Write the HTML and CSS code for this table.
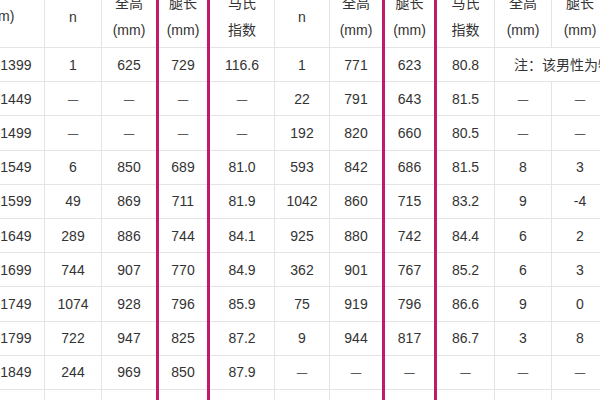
FILE: index.html
```html
<!DOCTYPE html>
<html lang="zh-CN">
<head>
<meta charset="utf-8">
<title>身高与腿长</title>
<link rel="stylesheet" href="styles.css">
</head>
<body>
<div class="frame">
  <table class="data">
    <colgroup>
      <col class="c-range"><col class="c-n1"><col class="c-h1"><col class="c-l1"><col class="c-i1">
      <col class="c-n2"><col class="c-h2"><col class="c-l2"><col class="c-i2"><col class="c-d1"><col class="c-d2">
    </colgroup>
    <thead>
      <tr class="group">
        <th rowspan="2" class="range-head">身高<br>(mm)</th>
        <th colspan="4">男性</th>
        <th colspan="4">女性</th>
        <th colspan="2">男女差</th>
      </tr>
      <tr class="sub">
        <th>n</th><th>全高<br>(mm)</th><th class="hl">腿长<br>(mm)</th><th>马氏<br>指数</th>
        <th>n</th><th>全高<br>(mm)</th><th class="hl">腿长<br>(mm)</th><th>马氏<br>指数</th>
        <th>全高<br>(mm)</th><th>腿长<br>(mm)</th>
      </tr>
    </thead>
    <tbody>
      <tr><td>1350-1399</td><td>1</td><td>625</td><td class="hl">729</td><td>116.6</td><td>1</td><td>771</td><td class="hl">623</td><td>80.8</td><td colspan="2" class="note">注：该男性为特殊个例</td></tr>
      <tr><td>1400-1449</td><td class="na">—</td><td class="na">—</td><td class="hl na">—</td><td class="na">—</td><td>22</td><td>791</td><td class="hl">643</td><td>81.5</td><td class="na">—</td><td class="na">—</td></tr>
      <tr><td>1450-1499</td><td class="na">—</td><td class="na">—</td><td class="hl na">—</td><td class="na">—</td><td>192</td><td>820</td><td class="hl">660</td><td>80.5</td><td class="na">—</td><td class="na">—</td></tr>
      <tr><td>1500-1549</td><td>6</td><td>850</td><td class="hl">689</td><td>81.0</td><td>593</td><td>842</td><td class="hl">686</td><td>81.5</td><td>8</td><td>3</td></tr>
      <tr><td>1550-1599</td><td>49</td><td>869</td><td class="hl">711</td><td>81.9</td><td>1042</td><td>860</td><td class="hl">715</td><td>83.2</td><td>9</td><td>-4</td></tr>
      <tr><td>1600-1649</td><td>289</td><td>886</td><td class="hl">744</td><td>84.1</td><td>925</td><td>880</td><td class="hl">742</td><td>84.4</td><td>6</td><td>2</td></tr>
      <tr><td>1650-1699</td><td>744</td><td>907</td><td class="hl">770</td><td>84.9</td><td>362</td><td>901</td><td class="hl">767</td><td>85.2</td><td>6</td><td>3</td></tr>
      <tr><td>1700-1749</td><td>1074</td><td>928</td><td class="hl">796</td><td>85.9</td><td>75</td><td>919</td><td class="hl">796</td><td>86.6</td><td>9</td><td>0</td></tr>
      <tr><td>1750-1799</td><td>722</td><td>947</td><td class="hl">825</td><td>87.2</td><td>9</td><td>944</td><td class="hl">817</td><td>86.7</td><td>3</td><td>8</td></tr>
      <tr><td>1800-1849</td><td>244</td><td>969</td><td class="hl">850</td><td>87.9</td><td class="na">—</td><td class="na">—</td><td class="hl na">—</td><td class="na">—</td><td class="na">—</td><td class="na">—</td></tr>
      <tr><td>1850-1899</td><td>33</td><td>988</td><td class="hl">874</td><td>88.5</td><td class="na">—</td><td class="na">—</td><td class="hl na">—</td><td class="na">—</td><td class="na">—</td><td class="na">—</td></tr>
    </tbody>
  </table>
</div>
</body>
</html>
```
FILE: styles.css
```css
* { box-sizing: border-box; }

html, body {
  margin: 0;
  padding: 0;
  background: #ffffff;
}

body {
  font-family: "Liberation Sans", "Noto Sans CJK SC", sans-serif;
  font-size: 14px;
  color: #333333;
}

.frame {
  width: 600px;
  height: 400px;
  overflow: hidden;
}

.data {
  border-collapse: collapse;
  table-layout: fixed;
  width: 657px;
  margin: -42px 0 0 -49px;
}

.c-range { width: 93px; }
.c-n1 { width: 57px; }
.c-h1 { width: 56px; }
.c-l1 { width: 51px; }
.c-i1 { width: 66px; }
.c-n2 { width: 55px; }
.c-h2 { width: 54px; }
.c-l2 { width: 52px; }
.c-i2 { width: 59px; }
.c-d1 { width: 57px; }
.c-d2 { width: 57px; }

.data th,
.data td {
  border: 1px solid #e4e4e6;
  padding: 0;
  text-align: center;
  vertical-align: middle;
  font-weight: normal;
  white-space: nowrap;
}

.data .group th {
  height: 27px;
  line-height: 27px;
}

.data .range-head {
  line-height: 27px;
}

.data .sub th {
  height: 61px;
  line-height: 27px;
}

.data tbody td {
  height: 34.2px;
  line-height: 20px;
}

.data tbody td.na {
  font-size: 10.5px;
  line-height: 20px;
}

.data .hl {
  border-left: 3px solid #c21a6b;
  border-right: 3px solid #c21a6b;
}

.data .note {
  text-align: left;
  padding-left: 19px;
}
```
